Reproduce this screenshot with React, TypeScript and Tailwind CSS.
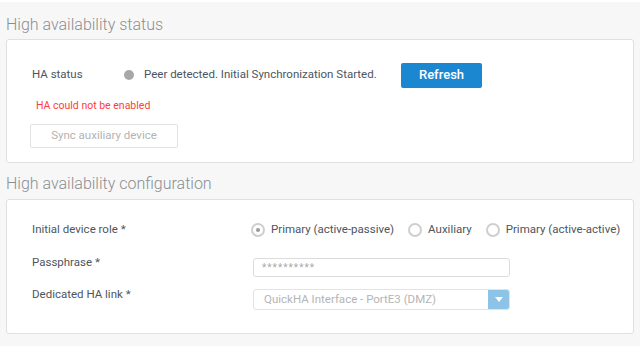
const font = { fontFamily: "Roboto, 'Noto Sans', sans-serif" };

const Radio = ({ checked, label }: { checked?: boolean; label: string }) => (
  <label className="flex items-center gap-[6px] whitespace-nowrap">
    <span className="flex h-[14px] w-[14px] items-center justify-center rounded-full border-2 border-[#cfcfcf] bg-white">
      {checked && <span className="h-[4px] w-[4px] rounded-full bg-[#9a9a9a]" />}
    </span>
    <span>{label}</span>
  </label>
);

export default function App() {
  return (
    <div
      className="h-[346px] w-[640px] overflow-hidden whitespace-nowrap border-t-2 border-white bg-[#f7f7f7] text-[11.5px] text-[#4d5560]"
      style={font}
    >
      <div className="pl-[6px] pr-[6px]">
        <h2 className="h-[37px] pt-[11px] text-[16px] font-light leading-[24px] text-[#8a8e93]">
          High availability status
        </h2>
        <div className="h-[124px] rounded-[3px] border border-[#e0e0e0] bg-white pl-[23px]">
          <div className="mt-[23px] flex h-[24px] items-center">
            <span className="ml-[2px] w-[92px]">HA status</span>
            <span className="h-[10px] w-[10px] rounded-full bg-[#a8a8a8]" />
            <span className="ml-[10px] w-[257px]">Peer detected. Initial Synchronization Started.</span>
            <button className="h-[25px] w-[81px] rounded-[2px] bg-[#1b87d0] text-[13px] font-medium text-white">
              Refresh
            </button>
          </div>
          <div className="mt-[12px] ml-[6px] text-[10.5px] leading-[14px] text-[#ff3b3b]">
            HA could not be enabled
          </div>
          <button className="mt-[11px] h-[24px] w-[148px] rounded-[2px] border border-[#e3e3e3] bg-white text-[11.5px] text-[#b3b3b3]">
            Sync auxiliary device
          </button>
        </div>
        <h2 className="h-[36px] pt-[9px] text-[16px] font-light leading-[24px] text-[#8a8e93]">
          High availability configuration
        </h2>
        <div className="h-[135px] rounded-[3px] border border-[#e0e0e0] bg-white pl-[24px]">
          <div className="mt-[22px] flex h-[16px] items-center">
            <span className="ml-[1px] w-[219px]">Initial device role *</span>
            <div className="flex items-center gap-[14px]">
              <Radio checked label="Primary (active-passive)" />
              <Radio label="Auxiliary" />
              <Radio label="Primary (active-active)" />
            </div>
          </div>
          <div className="mt-[20px] flex items-start">
            <span className="ml-[1px] mt-[-4px] w-[221px]">Passphrase *</span>
            <div className="flex h-[19px] w-[257px] items-center rounded-[3px] border border-[#dcdcdc] px-[8px] text-[10px] tracking-[1px] text-[#aaa]">
              **********
            </div>
          </div>
          <div className="mt-[12px] flex items-start">
            <span className="ml-[1px] mt-[-3px] w-[221px]">Dedicated HA link *</span>
            <div className="flex h-[21px] w-[257px] overflow-hidden rounded-[3px] border border-[#e3e3e3]">
              <span className="flex flex-1 items-center px-[10px] text-[#b5b5b5]">
                QuickHA Interface - PortE3 (DMZ)
              </span>
              <span className="flex w-[21px] items-center justify-center bg-[#8cc3e7]">
                <svg width="8" height="5" viewBox="0 0 8 5">
                  <path d="M0 0 H8 L4 5 Z" fill="#fff" />
                </svg>
              </span>
            </div>
          </div>
        </div>
      </div>
    </div>
  );
}
